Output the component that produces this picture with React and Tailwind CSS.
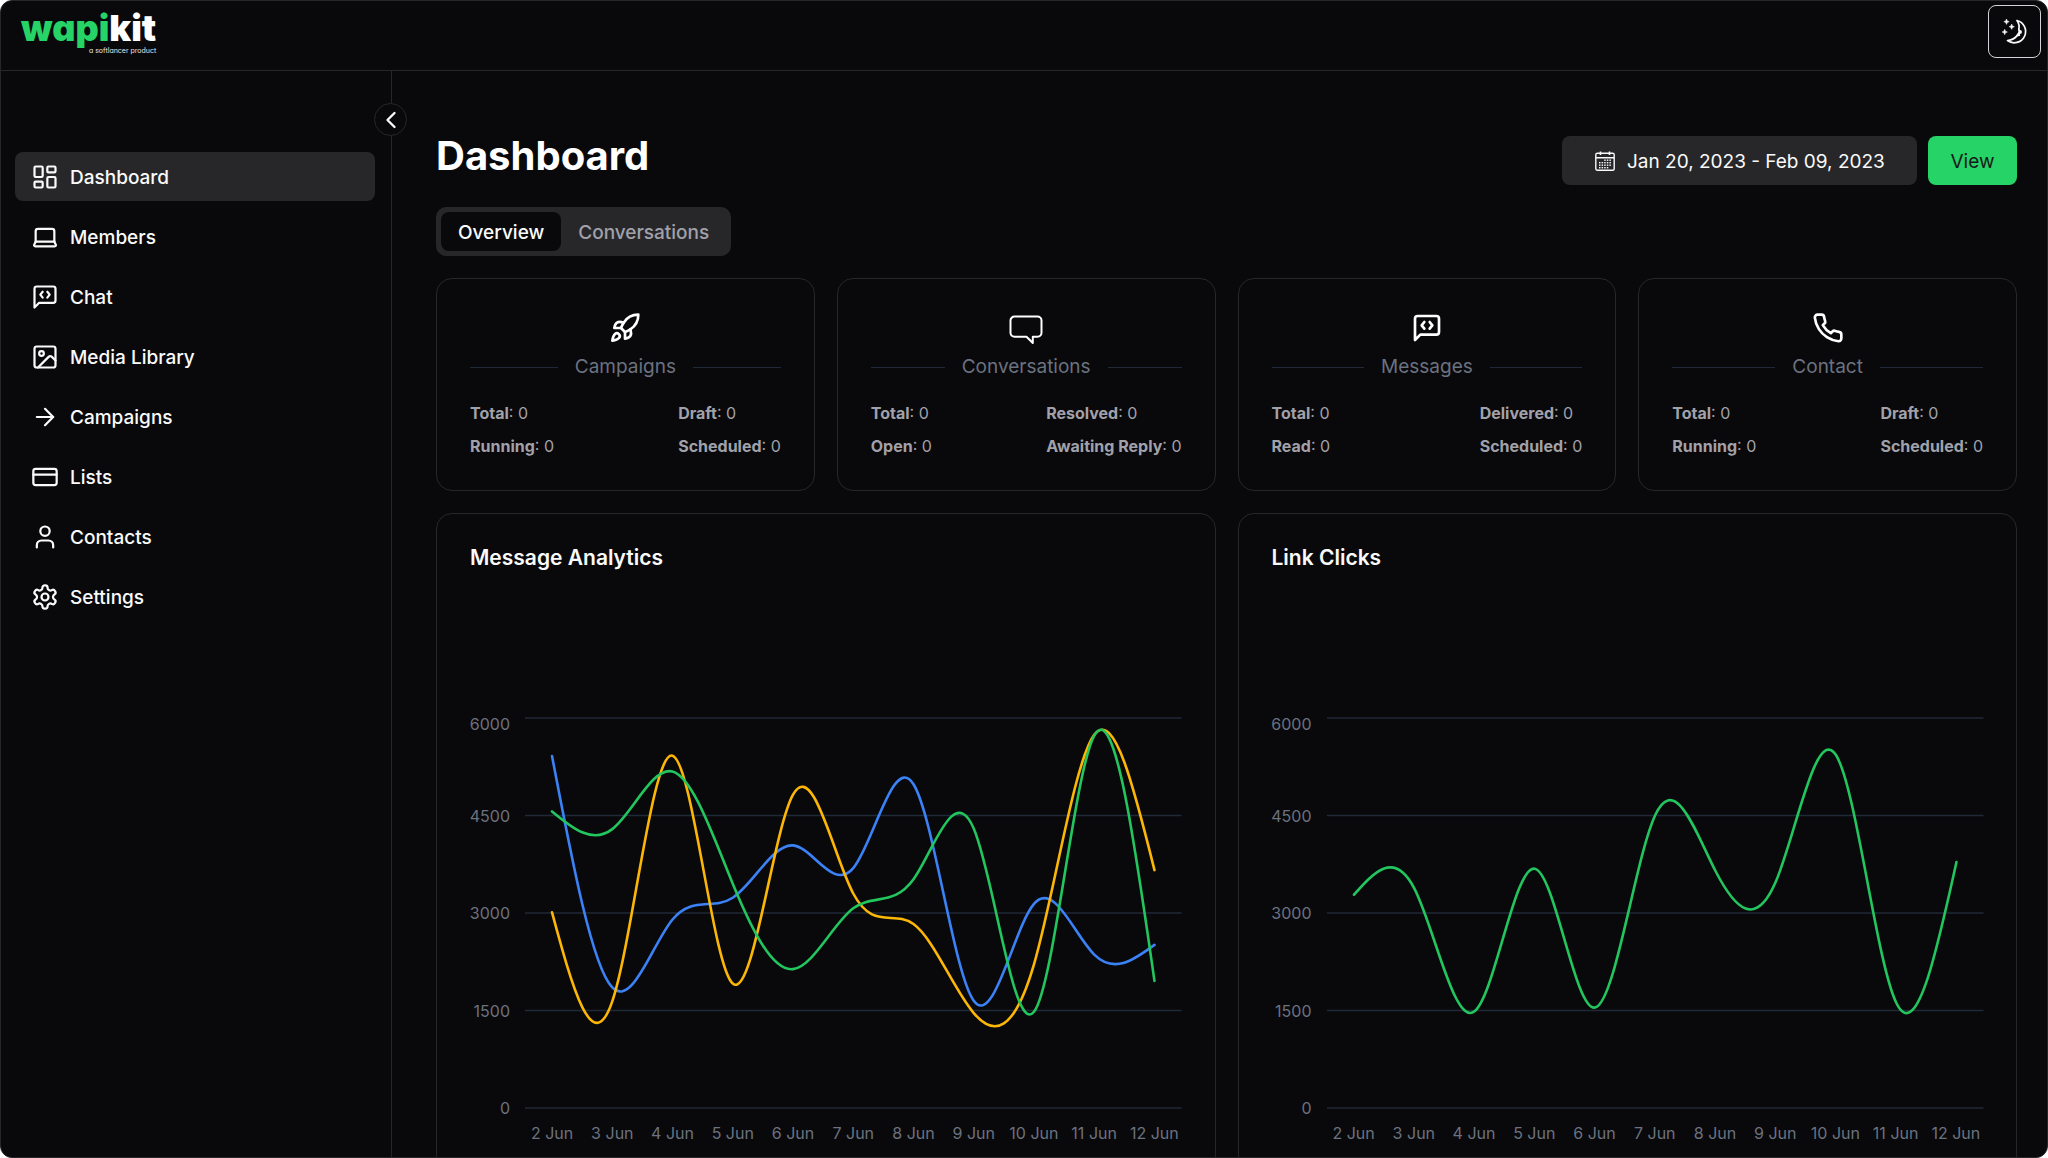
import React from "react";
import {
  ArrowRight,
  ChevronLeft,
  CreditCard,
  Image as ImageIcon,
  Laptop,
  LayoutDashboard,
  Rocket,
  User,
} from "lucide-react";

function StrokeIcon({ className, strokeWidth = 2, children }) {
  return (
    <svg
      viewBox="0 0 24 24"
      fill="none"
      stroke="currentColor"
      strokeWidth={strokeWidth}
      strokeLinecap="round"
      strokeLinejoin="round"
      className={className}
      aria-hidden="true"
    >
      {children}
    </svg>
  );
}

function MessageCode(props) {
  return (
    <StrokeIcon {...props}>
      <path d="M21 15a2 2 0 0 1-2 2H7l-4 4V5a2 2 0 0 1 2-2h14a2 2 0 0 1 2 2z" />
      <path d="M10 7.5 8 10l2 2.5" />
      <path d="m14 7.5 2 2.5-2 2.5" />
    </StrokeIcon>
  );
}

function Gear(props) {
  return (
    <StrokeIcon {...props}>
      <path d="M12.22 2h-.44a2 2 0 0 0-2 2v.18a2 2 0 0 1-1 1.73l-.43.25a2 2 0 0 1-2 0l-.15-.08a2 2 0 0 0-2.73.73l-.22.38a2 2 0 0 0 .73 2.73l.15.1a2 2 0 0 1 1 1.72v.51a2 2 0 0 1-1 1.74l-.15.09a2 2 0 0 0-.73 2.73l.22.38a2 2 0 0 0 2.73.73l.15-.08a2 2 0 0 1 2 0l.43.25a2 2 0 0 1 1 1.73V20a2 2 0 0 0 2 2h.44a2 2 0 0 0 2-2v-.18a2 2 0 0 1 1-1.73l.43-.25a2 2 0 0 1 2 0l.15.08a2 2 0 0 0 2.73-.73l.22-.39a2 2 0 0 0-.73-2.73l-.15-.08a2 2 0 0 1-1-1.74v-.5a2 2 0 0 1 1-1.74l.15-.09a2 2 0 0 0 .73-2.73l-.22-.38a2 2 0 0 0-2.73-.73l-.15.08a2 2 0 0 1-2 0l-.43-.25a2 2 0 0 1-1-1.73V4a2 2 0 0 0-2-2z" />
      <circle cx="12" cy="12" r="3" />
    </StrokeIcon>
  );
}

function Phone(props) {
  return (
    <StrokeIcon {...props}>
      <path d="M22 16.92v3a2 2 0 0 1-2.18 2 19.79 19.79 0 0 1-8.63-3.07 19.5 19.5 0 0 1-6-6 19.79 19.79 0 0 1-3.07-8.67A2 2 0 0 1 4.11 2h3a2 2 0 0 1 2 1.72 12.84 12.84 0 0 0 .7 2.81 2 2 0 0 1-.45 2.11L8.09 9.91a16 16 0 0 0 6 6l1.27-1.27a2 2 0 0 1 2.11-.45 12.84 12.84 0 0 0 2.81.7A2 2 0 0 1 22 16.92z" />
    </StrokeIcon>
  );
}

function SpeechBubble({ className }) {
  return (
    <svg viewBox="0 0 34 32" fill="none" stroke="currentColor" strokeWidth="2" strokeLinejoin="round" className={className} aria-hidden="true">
      <path d="M5.5 4.5h23a4 4 0 0 1 4 4v12.3a4 4 0 0 1-4 4h-4.700v6.200l-6.300-6.200H5.500a4 4 0 0 1-4-4V8.5a4 4 0 0 1 4-4z" />
    </svg>
  );
}

function CalendarGrid({ className }) {
  const dots = [];
  for (let r = 0; r < 4; r++) {
    for (let c = 0; c < 5; c++) {
      if ((r === 0 && c < 2) || (r === 3 && c > 3)) continue;
      dots.push(<rect key={r + "-" + c} x={4 + c * 2.6} y={8.5 + r * 2.5} width="1.5" height="1.4" fill="currentColor" />);
    }
  }
  return (
    <svg viewBox="0 0 20 20" fill="none" stroke="currentColor" strokeWidth="1.4" className={className} aria-hidden="true">
      <rect x="0.8" y="2.2" width="18.4" height="17" rx="1.5" />
      <path d="M0.8 6.700h18.400" />
      <path d="M5.500 0.500v3.500M14.500 0.500v3.500" strokeWidth="1.6" />
      <g stroke="none">{dots}</g>
    </svg>
  );
}

function MoonFace({ className }) {
  return (
    <svg viewBox="0 0 26 26" fill="none" stroke="currentColor" strokeWidth="1.7" strokeLinejoin="round" className={className} aria-hidden="true">
      <path d="M15 1.500A11.300 11.300 0 1 1 5.500 21.500C10.500 21 14 18.600 15.800 15.500L17.400 13 16.800 10.500C17.500 7.500 16.800 4 15 1.500Z" />
      <path d="M16.800 10.200 19.800 11.800V14.200L18 15 18.200 16.800 15.500 17.600 14.500 16.500 16.800 13.500Z" fill="currentColor" stroke="none" />
      <g fill="currentColor" stroke="currentColor" strokeWidth="0.5">
        <path d="M4.500 0 5.300 1.900 7.200 2.700 5.300 3.500 4.500 5.400 3.700 3.500 1.800 2.700 3.700 1.900Z" />
        <path d="M9.700 5 10.500 6.900 12.400 7.700 10.500 8.500 9.700 10.400 8.900 8.500 7 7.700 8.900 6.900Z" />
        <path d="M2.700 10.300 3.500 12.200 5.400 13 3.500 13.800 2.700 15.700 1.900 13.800 0 13 1.900 12.200Z" />
      </g>
    </svg>
  );
}

const NAV = [
  { label: "Dashboard", icon: LayoutDashboard, active: true },
  { label: "Members", icon: Laptop },
  { label: "Chat", icon: MessageCode },
  { label: "Media Library", icon: ImageIcon },
  { label: "Campaigns", icon: ArrowRight },
  { label: "Lists", icon: CreditCard },
  { label: "Contacts", icon: User },
  { label: "Settings", icon: Gear },
];

const STATS = [
  {
    title: "Campaigns",
    icon: Rocket,
    columns: [["Total", "Running"], ["Draft", "Scheduled"]],
  },
  {
    title: "Conversations",
    icon: SpeechBubble,
    columns: [["Total", "Open"], ["Resolved", "Awaiting Reply"]],
  },
  {
    title: "Messages",
    icon: MessageCode,
    columns: [["Total", "Read"], ["Delivered", "Scheduled"]],
  },
  {
    title: "Contact",
    icon: Phone,
    columns: [["Total", "Running"], ["Draft", "Scheduled"]],
  },
];

const DAYS = ["2 Jun", "3 Jun", "4 Jun", "5 Jun", "6 Jun", "7 Jun", "8 Jun", "9 Jun", "10 Jun", "11 Jun", "12 Jun"];
const LEVELS = [6000, 4500, 3000, 1500, 0];

const MESSAGE_SERIES = [
  { color: "#3b82f6", values: [5415, 1855, 2900, 3235, 4040, 3690, 4980, 1650, 3140, 2360, 2510] },
  { color: "#fbb606", values: [3010, 1640, 5420, 1915, 4820, 3300, 2830, 1460, 2210, 5740, 3660] },
  { color: "#22c55e", values: [4563, 4290, 5177, 3450, 2137, 3072, 3519, 4300, 1480, 5730, 1954] },
];
const CLICK_SERIES = [
  { color: "#22c55e", values: [3282, 3380, 1487, 3682, 1545, 4508, 3646, 3480, 5430, 1620, 3785] },
];

/* Natural cubic spline through evenly spaced points, as a Bezier path. */
function splinePath(values) {
  const width = 656;
  const height = 390;
  const inset = 27;
  const step = (width - inset * 2) / (values.length - 1);
  const y = values.map((v) => height - (v / 6000) * height);
  const n = y.length;
  const c = new Array(n).fill(0);
  const d = new Array(n).fill(0);
  const slope = new Array(n).fill(0);
  c[0] = 0.5;
  d[0] = (3 * (y[1] - y[0])) / 2;
  for (let i = 1; i < n; i++) {
    const last = i === n - 1;
    const diag = last ? 2 : 4;
    const rhs = last ? 3 * (y[i] - y[i - 1]) : 3 * (y[i + 1] - y[i - 1]);
    const m = diag - c[i - 1];
    c[i] = 1 / m;
    d[i] = (rhs - d[i - 1]) / m;
  }
  slope[n - 1] = d[n - 1];
  for (let i = n - 2; i >= 0; i--) slope[i] = d[i] - c[i] * slope[i + 1];
  let path = `M${inset} ${y[0]}`;
  for (let i = 0; i < n - 1; i++) {
    const x0 = inset + i * step;
    path += `C${x0 + step / 3} ${y[i] + slope[i] / 3} ${x0 + (2 * step) / 3} ${y[i + 1] - slope[i + 1] / 3} ${x0 + step} ${y[i + 1]}`;
  }
  return path;
}

function LineChart({ title, series }) {
  return (
    <section className="min-w-0 rounded-2xl border border-[#27272a] px-[33px] pt-[30px] pb-8">
      <h2 className="text-[21px] leading-7 font-semibold text-[#fafafa]">{title}</h2>
      <div className="mt-[146px] flex gap-[15px]">
        <div className="flex h-[390px] w-10 shrink-0 flex-col justify-between text-right text-base leading-3 text-[#6b7280]">
          {LEVELS.map((level, i) => (
            <div key={level} className={i === 0 ? "flex h-0 items-start justify-end leading-3" : "flex h-0 items-center justify-end leading-3"}>
              {level}
            </div>
          ))}
        </div>
        <div className="min-w-0 flex-1">
          <svg viewBox="0 0 656 390" preserveAspectRatio="none" className="block h-[390px] w-full overflow-visible" fill="none" role="img" aria-label={title}>
            {LEVELS.map((level) => (
              <path key={level} d={`M0 ${390 - (level / 6000) * 390}H656`} stroke="#1f2937" strokeWidth="1.5" vectorEffect="non-scaling-stroke" />
            ))}
            {series.map((s, i) => (
              <path key={i} d={splinePath(s.values)} stroke={s.color} strokeWidth="2.6" strokeLinecap="round" vectorEffect="non-scaling-stroke" />
            ))}
          </svg>
          <div className="-mx-[3px] mt-[13px] grid grid-cols-11 text-center text-base leading-6 whitespace-nowrap text-[#6b7280]">
            {DAYS.map((day) => (
              <span key={day}>{day}</span>
            ))}
          </div>
        </div>
      </div>
    </section>
  );
}

function StatCard({ title, icon: Icon, columns }) {
  return (
    <section className="flex min-w-0 flex-col rounded-2xl border border-[#27272a] px-[33px] pt-[33px] pb-8">
      <Icon className="h-8 w-[34px] self-center text-white" />
      <div className="mt-[9px] flex items-center gap-[17px]">
        <span className="h-px flex-1 bg-[#1f2937]" />
        <h3 className="text-[19px] leading-7 text-[#6b7280]">{title}</h3>
        <span className="h-px flex-1 bg-[#1f2937]" />
      </div>
      <div className="mt-5 flex justify-between text-base leading-6 text-[#a1a1aa]">
        {columns.map((column, i) => (
          <div key={i} className="flex flex-col gap-[9px]">
            {column.map((name) => (
              <p key={name}>
                <b className="font-bold">{name}</b>: 0
              </p>
            ))}
          </div>
        ))}
      </div>
    </section>
  );
}

export default function App() {
  return (
    <div className="h-screen bg-white font-['Inter',sans-serif]">
      <div className="flex h-full flex-col overflow-hidden rounded-xl border border-[#27272a] bg-[#09090b] text-[#fafafa]">
        <header className="flex h-[70px] shrink-0 items-start justify-between border-b border-[#27272a] pt-1 pr-[6px] pl-5">
          <a href="#" aria-label="wapikit" className="flex flex-col items-end pt-[5px]">
            <span className="text-4xl leading-9 font-black text-white [font-feature-settings:'cv11']">
              <span className="text-[#25d366]">wapi</span>kit
            </span>
            <span className="text-[7px] leading-[10px] text-[#e4e4e7] [font-feature-settings:'cv11']">a softlancer product</span>
          </a>
          <button type="button" aria-label="Toggle theme" className="flex h-[53px] w-[53px] items-center justify-center rounded-lg border border-[#d4d4d8]">
            <MoonFace className="h-[26px] w-[26px]" />
          </button>
        </header>

        <div className="flex min-h-0 flex-1">
          <aside className="relative w-[391px] shrink-0 border-r border-[#27272a] pt-[81px] pr-4 pl-[14px]">
            <button type="button" aria-label="Collapse sidebar" className="absolute top-8 -right-4 flex h-[33px] w-[33px] items-center justify-center rounded-full border border-[#27272a] bg-[#09090b]">
              <ChevronLeft size={28} />
            </button>
            <nav className="flex flex-col gap-[11px]">
              {NAV.map(({ label, icon: Icon, active }) => (
                <a
                  key={label}
                  href="#"
                  className={
                    active
                      ? "flex h-[49px] items-center gap-[11px] rounded-lg bg-[#27272a] pl-4 text-[19px] leading-7 font-medium"
                      : "flex h-[49px] items-center gap-[11px] rounded-lg pl-4 text-[19px] leading-7 font-medium"
                  }
                >
                  <Icon className="h-7 w-7" strokeWidth={1.9} />
                  <span className="pt-0.5">{label}</span>
                </a>
              ))}
            </nav>
          </aside>

          <main className="min-w-0 flex-1 overflow-hidden pt-[61px] pr-[30px] pl-11">
            <div className="flex items-start justify-between">
              <h1 className="text-[40px] leading-[47px] font-bold text-white">Dashboard</h1>
              <div className="flex gap-[11px] pt-1">
                <button type="button" className="flex h-[49px] w-[355px] items-center gap-3 rounded-lg bg-[#27272a] pl-[33px] text-[19px] leading-7">
                  <CalendarGrid className="h-5 w-5" />
                  <span className="pt-0.5">Jan 20, 2023 - Feb 09, 2023</span>
                </button>
                <button type="button" className="h-[49px] w-[89px] rounded-lg bg-[#25d366] pt-0.5 text-[19px] leading-7 text-[#18181b]">
                  View
                </button>
              </div>
            </div>

            <div role="tablist" className="mt-[22px] flex h-[49px] w-fit items-center rounded-[10px] bg-[#27272a] p-[5px] text-[19px] leading-7 font-medium">
              <button type="button" role="tab" aria-selected="true" className="h-full rounded-lg bg-[#09090b] px-[17px] pt-0.5">
                Overview
              </button>
              <button type="button" role="tab" aria-selected="false" className="h-full px-[17px] pt-0.5 text-[#a1a1aa]">
                Conversations
              </button>
            </div>

            <div className="mt-[22px] grid grid-cols-4 gap-[22px]">
              {STATS.map((stat) => (
                <StatCard key={stat.title} {...stat} />
              ))}
            </div>

            <div className="mt-[22px] grid grid-cols-2 gap-[22px]">
              <LineChart title="Message Analytics" series={MESSAGE_SERIES} />
              <LineChart title="Link Clicks" series={CLICK_SERIES} />
            </div>
          </main>
        </div>
      </div>
    </div>
  );
}
